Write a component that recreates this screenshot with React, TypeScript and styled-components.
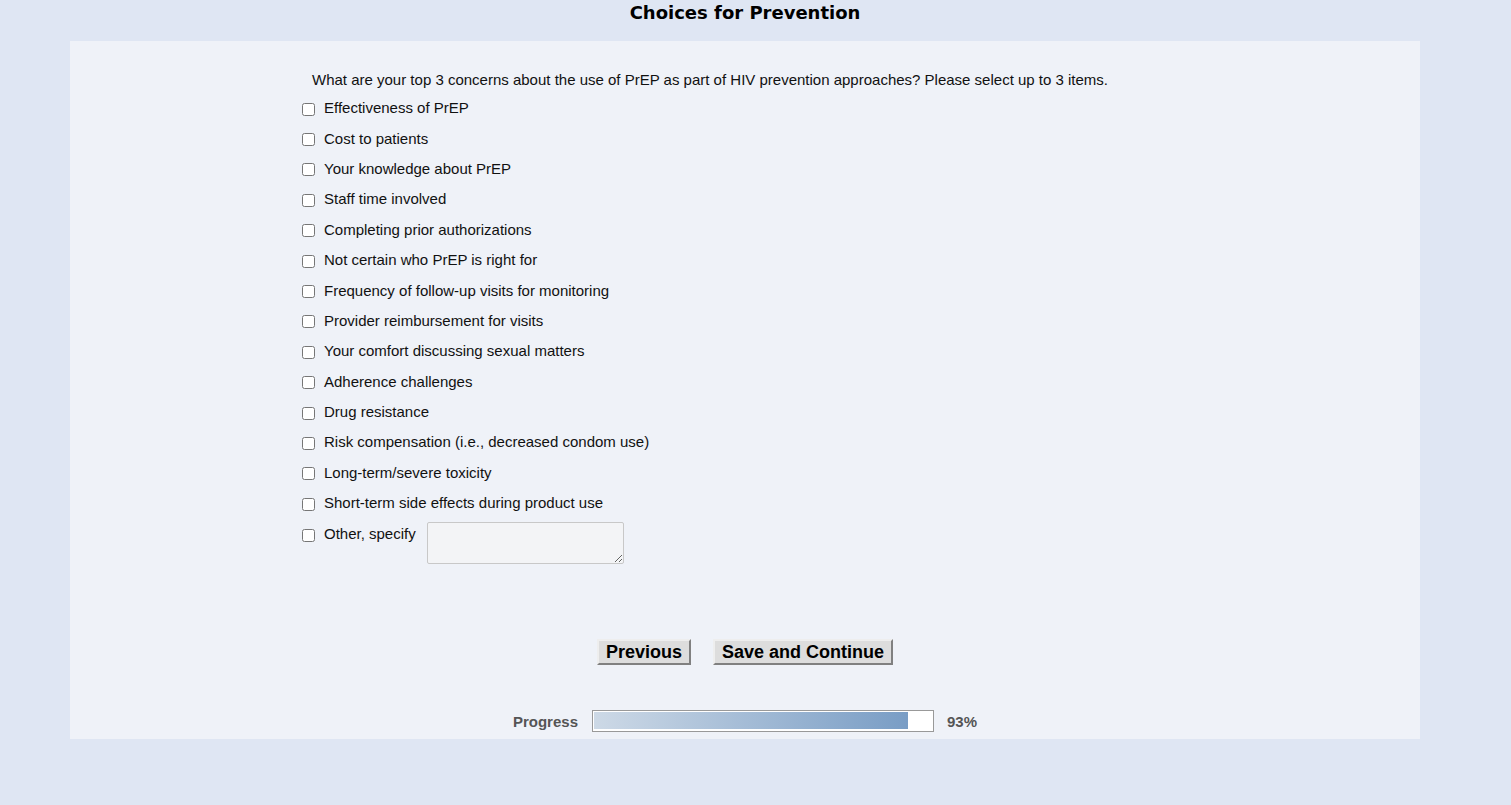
import React from "react";
import styled, { createGlobalStyle } from "styled-components";

const Global = createGlobalStyle`
  html, body { margin: 0; padding: 0; background: #dfe6f3; }
  body { font-family: "Liberation Sans", Arial, sans-serif; color: #111; }
`;

const Page = styled.div`
  width: 1350px;
  margin-left: 70px;
`;

const Title = styled.h1`
  margin: 0;
  height: 41px;
  padding-top: 1px;
  box-sizing: border-box;
  text-align: center;
  font-family: "DejaVu Sans", Verdana, sans-serif;
  font-weight: bold;
  font-size: 18px;
  line-height: 24px;
  color: #000;
`;

const Panel = styled.div`
  background: #eff2f8;
  height: 698px;
  box-sizing: border-box;
  padding-top: 30px;
  display: flex;
  flex-direction: column;
`;

const Form = styled.div`
  padding-left: 228px;
  display: flex;
  flex-direction: column;
`;

const Question = styled.div`
  font-size: 15px;
  line-height: 18px;
  padding-left: 14px;
  margin-bottom: 4px;
`;

const Row = styled.label<{ $tall?: boolean }>`
  display: flex;
  align-items: ${(p) => (p.$tall ? "flex-start" : "center")};
  height: ${(p) => (p.$tall ? "auto" : "30.4px")};
  font-size: 15px;
  line-height: 18px;
  padding-top: ${(p) => (p.$tall ? "7px" : "0")};
`;

const Check = styled.input`
  appearance: none;
  -webkit-appearance: none;
  width: 13px;
  height: 13px;
  box-sizing: border-box;
  border: 1px solid #767676;
  border-radius: 2.5px;
  background: #fff;
  margin: 2px 9px 0 4px;
  flex: none;
`;

const TallCheck = styled(Check)`
  margin-top: 4px;
`;

const Specify = styled.textarea`
  margin-left: 11px;
  margin-top: -3px;
  width: 197px;
  height: 42px;
  box-sizing: border-box;
  border: 1px solid #c8c8c8;
  border-radius: 2px;
  background: #f3f4f6;
  resize: both;
  font-family: inherit;
`;

const Buttons = styled.div`
  display: flex;
  justify-content: center;
  gap: 22px;
  margin-top: 75px;
`;

const Button = styled.button`
  height: 26px;
  padding: 0 7px;
  font-family: "Liberation Sans", Arial, sans-serif;
  font-weight: bold;
  font-size: 18px;
  line-height: 20px;
  color: #000;
  background: #dddddd;
  border: 2px solid;
  border-color: #eeeeee #808080 #808080 #eeeeee;
  cursor: pointer;
`;

const ProgressRow = styled.div`
  display: flex;
  justify-content: center;
  align-items: center;
  margin-top: 45px;
  font-size: 15px;
  font-weight: bold;
  color: #555;
`;

const Label = styled.span`
  margin-right: 14px;
`;

const Pct = styled.span`
  margin-left: 13px;
`;

const Track = styled.div`
  width: 342px;
  height: 22px;
  box-sizing: border-box;
  border: 1px solid #999;
  background: #fff;
  padding: 1px 1px 2px 1px;
  display: flex;
`;

const Fill = styled.div`
  height: 100%;
  background: linear-gradient(to right, #cdd9e6, #799dc5);
`;

const items = [
  "Effectiveness of PrEP",
  "Cost to patients",
  "Your knowledge about PrEP",
  "Staff time involved",
  "Completing prior authorizations",
  "Not certain who PrEP is right for",
  "Frequency of follow-up visits for monitoring",
  "Provider reimbursement for visits",
  "Your comfort discussing sexual matters",
  "Adherence challenges",
  "Drug resistance",
  "Risk compensation (i.e., decreased condom use)",
  "Long-term/severe toxicity",
  "Short-term side effects during product use",
];

export default function App() {
  const pct = 93;
  return (
    <>
      <Global />
      <Page>
        <Title>Choices for Prevention</Title>
        <Panel>
          <Form>
            <Question>
              What are your top 3 concerns about the use of PrEP as part of HIV prevention approaches? Please select up to 3 items.
            </Question>
            {items.map((t) => (
              <Row key={t}>
                <Check type="checkbox" />
                {t}
              </Row>
            ))}
            <Row $tall>
              <TallCheck type="checkbox" />
              Other, specify
              <Specify />
            </Row>
          </Form>
          <Buttons>
            <Button>Previous</Button>
            <Button>Save and Continue</Button>
          </Buttons>
          <ProgressRow>
            <Label>Progress</Label>
            <Track>
              <Fill style={{ width: `${pct}%` }} />
            </Track>
            <Pct>{pct}%</Pct>
          </ProgressRow>
        </Panel>
      </Page>
    </>
  );
}
